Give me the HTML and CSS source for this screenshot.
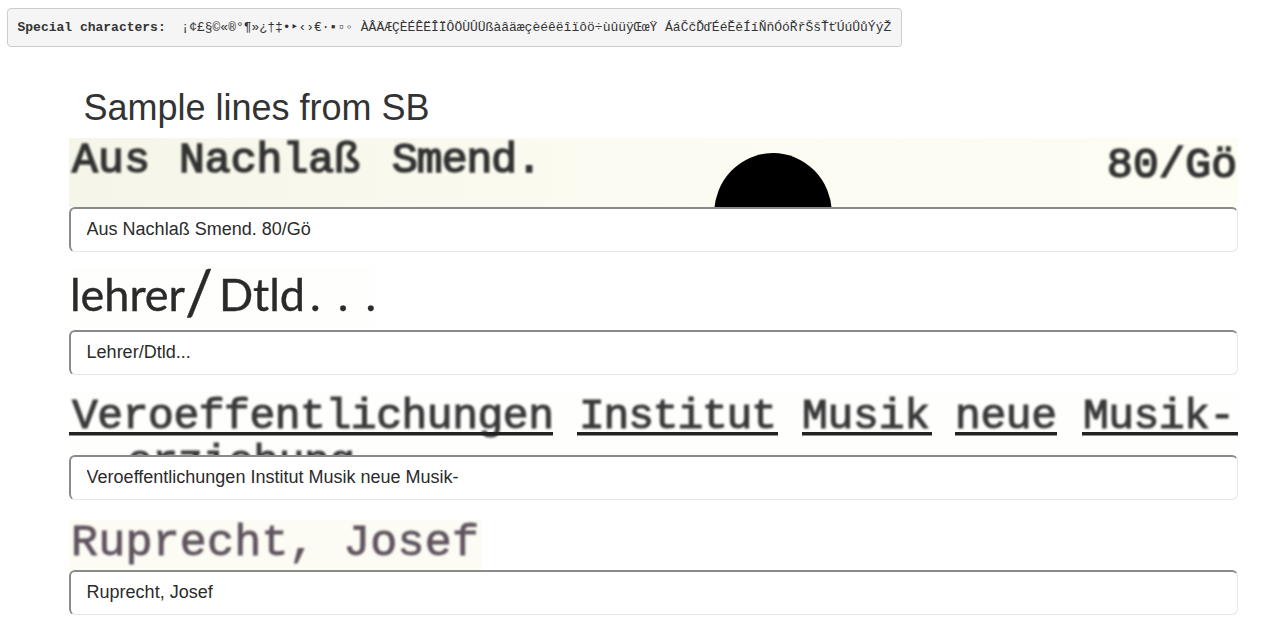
FILE: index.html
```html
<!DOCTYPE html>
<html lang="de">
<head>
    <meta charset="UTF-8">
    <meta name="viewport" content="width=device-width, initial-scale=1.0">
    <title>Sample lines from SB</title>
    <link rel="stylesheet" href="styles.css">
</head>
<body>
    <pre class="charbar"><b>Special characters:</b>  ¡¢£§©«®°¶»¿†‡•‣‹›€·▪▫◦ ÀÂÄÆÇÈÉÊËÎÏÔÖÙÛÜßàâäæçèéêëîïôö÷ùûüÿŒœŸ ÁáČčĎďÉéĚěÍíŇňÓóŘřŠšŤťÚúŮůÝýŽ</pre>

    <div class="lines">
        <h1>Sample lines from SB</h1>

        <div class="line">
            <!-- scan 1: typewriter line with punched hole -->
            <svg class="scan scan-1" width="1169" height="69">
                <ellipse class="hole" cx="704" cy="76" rx="59" ry="61"></ellipse>
                <text class="type type-dark" x="3" y="34" textLength="78">Aus</text>
                <text class="type type-dark" x="110" y="34" textLength="181">Nachlaß</text>
                <text class="type type-dark" x="323" y="34" textLength="150">Smend.</text>
                <text class="type type-dark" x="1038" y="39" textLength="130">80/Gö</text>
            </svg>
            <input class="line-input" type="text" value="Aus Nachlaß Smend. 80/Gö">
        </div>

        <div class="line">
            <svg class="scan scan-2" width="1169" height="63">
                <rect class="paper-white" width="306" height="63"></rect>
                <text class="sans" x="1" y="44" textLength="115">lehrer</text>
                <text class="sans sans-slash" x="116" y="48">/</text>
                <text class="sans" x="150" y="44" textLength="86">Dtld</text>
                <text class="sans" x="241" y="44" textLength="66">...</text>
            </svg>
            <input class="line-input" type="text" value="Lehrer/Dtld...">
        </div>

        <div class="line">
            <svg class="scan scan-3" width="1169" height="65">
                <rect class="paper-white" width="1169" height="65"></rect>
                <text class="type" x="3" y="38" textLength="482">Veroeffentlichungen</text>
                <text class="type" x="510" y="38" textLength="198">Institut</text>
                <text class="type" x="733" y="38" textLength="128">Musik</text>
                <text class="type" x="886" y="38" textLength="102">neue</text>
                <text class="type" x="1014" y="38" textLength="152">Musik-</text>
                <rect class="rule" x="0" y="42" width="484" height="3.5"></rect>
                <rect class="rule" x="508" y="42" width="201" height="3.5"></rect>
                <rect class="rule" x="733" y="42" width="130" height="3.5"></rect>
                <rect class="rule" x="886" y="42" width="102" height="3.5"></rect>
                <rect class="rule" x="1013" y="42" width="156" height="3.5"></rect>
                <text class="type" x="58" y="84" textLength="228">erziehung</text>
            </svg>
            <input class="line-input" type="text" value="Veroeffentlichungen Institut Musik neue Musik-">
        </div>

        <div class="line">
            <svg class="scan scan-4" width="1169" height="55">
                <rect class="paper-cream" y="5" width="413" height="50"></rect>
                <text class="type type-faded" x="2" y="40" textLength="408">Ruprecht, Josef</text>
            </svg>
            <input class="line-input" type="text" value="Ruprecht, Josef">
        </div>
    </div>
</body>
</html>
```

FILE: styles.css
```css
body { margin: 0; font-family: "Liberation Sans", Arial, sans-serif; color: #333; background: #fff; }

.charbar {
    display: table;
    margin: 8px 0 0 7px;
    padding: 9.5px;
    font-family: "Liberation Mono", "DejaVu Sans Mono", monospace;
    font-size: 13px;
    line-height: 18px;
    color: #333;
    background: #f5f5f5;
    border: 1px solid #ccc;
    border-radius: 4px;
}

.lines { padding: 0 45px 0 69px; }
h1 { margin: 41px 0 10px 14.5px; font-size: 36px; font-weight: 500; line-height: 40px; }

.line { margin-bottom: 15px; }
.scan { display: block; }
.scan-1 { background: linear-gradient(90deg, #f5f5e9, #fbfbf1 45%, #fdfdf3); }
.paper-cream { fill: #fcfbf4; }
.paper-white { fill: #fefefd; }
.hole { fill: #000; filter: blur(0.7px); }
.rule { fill: #222; filter: blur(0.7px); }

.type {
    font-family: "Liberation Mono", monospace;
    font-size: 43px;
    fill: #3a3a3a;
    stroke: #3a3a3a;
    stroke-width: 1.1px;
    filter: blur(0.8px);
}
.type-dark { fill: #333; stroke: #333; stroke-width: 1.6px; }
.type-faded { font-size: 45px; fill: #5f545e; stroke: #5f545e; stroke-width: 0.8px; }
.sans { font-family: Lato, "Open Sans", sans-serif; font-size: 45px; fill: #2a2a2a; stroke: #2a2a2a; stroke-width: 0.4px; filter: blur(0.7px); }
.sans-slash { font-size: 62px; }

.line-input {
    display: block;
    box-sizing: border-box;
    width: 100%;
    height: 45px;
    padding: 0 15.6px 2px;
    font-family: "Liberation Sans", Arial, sans-serif;
    font-size: 18px;
    color: #2b2b2b;
    background: #fff;
    border-style: solid;
    border-width: 2px 1px 1px 2px;
    border-color: #8a8a8a #e6e6e6 #e6e6e6 #8a8a8a;
    border-radius: 6px;
}
```
